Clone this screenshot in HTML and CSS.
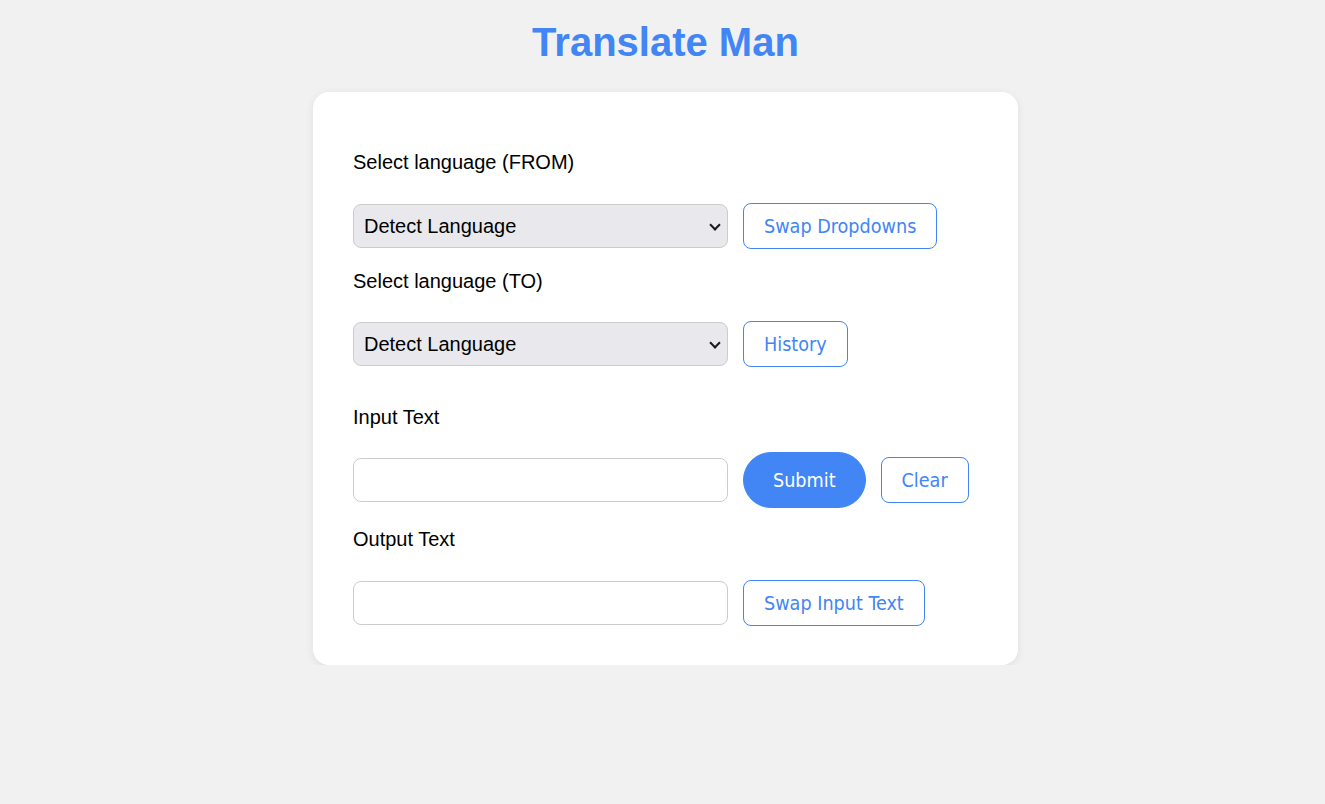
FILE: index.html
```html
<!DOCTYPE html>
<html lang="en">
<head>
<meta charset="utf-8">
<title>Translate Man</title>
<link rel="stylesheet" href="styles.css">
</head>
<body>
<h1 class="title">Translate Man</h1>
<main class="card">
  <section class="group">
    <label class="label" for="from">Select language (FROM)</label>
    <div class="row">
      <span class="select-wrap"><select id="from" class="field select"><option>Detect Language</option></select></span>
      <button class="btn">Swap Dropdowns</button>
    </div>
    <label class="label" for="to">Select language (TO)</label>
    <div class="row">
      <span class="select-wrap"><select id="to" class="field select"><option>Detect Language</option></select></span>
      <button class="btn">History</button>
    </div>
  </section>
  <section class="group group-text">
    <label class="label" for="input">Input Text</label>
    <div class="row">
      <input id="input" class="field" type="text">
      <button class="btn btn-primary">Submit</button>
      <button class="btn">Clear</button>
    </div>
    <label class="label label-after-submit" for="output">Output Text</label>
    <div class="row">
      <input id="output" class="field" type="text">
      <button class="btn">Swap Input Text</button>
    </div>
  </section>
</main>
</body>
</html>
```

FILE: styles.css
```css
* { box-sizing: border-box; }
body {
  margin: 0;
  padding-left: 6px;
  background: #f1f1f1;
  font-family: "Liberation Sans", Arial, sans-serif;
  color: #000;
}
.title {
  margin: 19px 0 27px;
  text-align: center;
  font-size: 40px;
  line-height: 46px;
  font-weight: bold;
  color: #4285f4;
}
.card {
  width: 705px;
  margin: 0 auto;
  background: #fff;
  border-radius: 16px;
  padding: 40px 40px 39px;
  box-shadow: 0 2px 8px rgba(0,0,0,0.08);
}
.group { display: flex; flex-direction: column; }
.group-text { margin-top: 19px; }
.label {
  display: block;
  font-size: 20px;
  line-height: 21px;
  margin: 22px 0 29px;
}
.group .label:first-child { margin-top: 20px; margin-bottom: 30px; }
.group-text .label:first-child { margin-top: 21px; margin-bottom: 29px; }
.label-after-submit { margin-top: 26px; margin-bottom: 30px; }
.row {
  display: flex;
  align-items: center;
  gap: 15px;
}
.field {
  width: 375px;
  height: 44px;
  border: 1px solid #cccccc;
  border-radius: 8px;
  background: #fff;
  font-family: "Liberation Sans", Arial, sans-serif;
  font-size: 20px;
  padding: 0 10px;
  color: #000;
}
.select-wrap {
  position: relative;
  display: block;
  width: 375px;
  height: 44px;
}
.select-wrap::after {
  content: "";
  position: absolute;
  right: 9px;
  top: 17px;
  width: 6px;
  height: 6px;
  border-right: 2px solid #1a1a1a;
  border-bottom: 2px solid #1a1a1a;
  transform: rotate(45deg);
  pointer-events: none;
}
.select {
  display: block;
  appearance: none;
  -webkit-appearance: none;
  background-color: #e9e9ed;
  padding-left: 10px;
  padding-right: 30px;
}
.btn {
  height: 46px;
  padding: 0 20px;
  background: #fff;
  border: 1px solid #4285f4;
  border-radius: 8px;
  color: #4285f4;
  font-family: "DejaVu Sans Condensed", "DejaVu Sans", sans-serif;
  font-size: 19.6px;
}
.btn-primary {
  height: 56px;
  margin: -5px 0;
  padding: 0 29px;
  border-radius: 28px;
  background: #4285f4;
  color: #fff;
}
```
